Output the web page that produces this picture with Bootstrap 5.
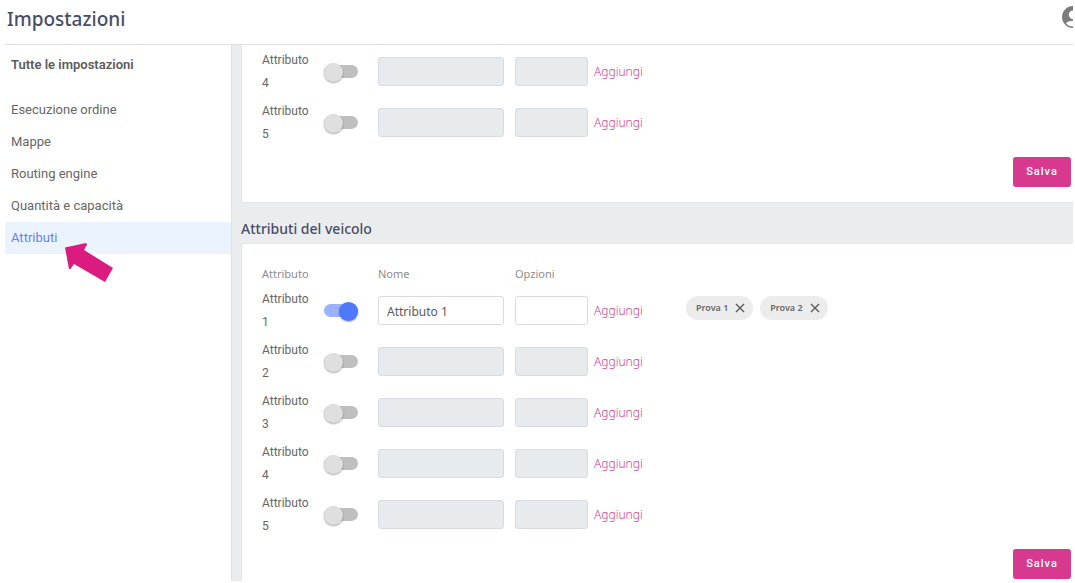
<!DOCTYPE html>
<html lang="it">
<head>
<meta charset="utf-8">
<meta name="viewport" content="width=device-width, initial-scale=1">
<title>Impostazioni</title>
<link href="https://cdn.jsdelivr.net/npm/bootstrap@5.3.0/dist/css/bootstrap.min.css" rel="stylesheet">
<style>
  :root { --ink: #474d66; --pink: #d6398e; --blue: #5078fc; --line: #dfe1e6; --grey: #ebecee; }
  body { font-family: Roboto, "Liberation Sans", sans-serif; font-size: 13px; line-height: 20px; color: #666; background: #fff; }
  .app { min-height: 100vh; padding: 0 2px 2px 5px; overflow: hidden; }
  .topbar { height: 45px; padding: 0 0 7px 2px; border-bottom: 1px solid var(--line); }
  .topbar h1 { font: 500 19px/28px "Noto Sans", sans-serif; color: var(--ink); }
  .account { width: 12px; height: 24px; margin-bottom: 4px; overflow: hidden; }
  .sidebar { width: 227px; border-right: 1px solid var(--line); padding-top: 10px; }
  .sidebar h2 { font-size: 13px; line-height: 20px; font-weight: 600; padding: 0 6px; margin-bottom: 19px; color: #5b5b5b; }
  .sidebar .nav-link { padding: 6px; color: #666; font-size: 13px; }
  .sidebar .nav-link.active { color: #6580fa; background: #ebf3ff; }
  .content { min-width: 0; background: var(--grey); padding-left: 9px; }
  .panel { background: #fff; border: 1px solid #e4e5e7; border-right: 0; border-radius: 3px 0 0 3px; padding: 20px 2px 0 20px; }
  .panel.scrolled { border-top: 0; border-top-left-radius: 0; padding-top: 4px; padding-bottom: 15px; }
  .panel.last { border-bottom: 0; border-bottom-left-radius: 0; }
  .content h2 { font: 500 14px/20px "Noto Sans", sans-serif; color: var(--ink); padding: 16px 0 4px; }
  .attr-row, .attr-head { display: grid; grid-template-columns: 62px 54px 137px 73px 98px 1fr; }
  .attr-row { height: 51px; }
  .attr-head { height: 24px; font-family: "Noto Sans", sans-serif; font-size: 11px; color: #8c8c8c; }
  .attr-row > label { width: 48px; font-size: 12px; line-height: 23px; }
  .toggle { appearance: none; width: 34px; height: 13px; margin: 16px 0 0; border-radius: 7px; background: #bfbfbf; position: relative; }
  .toggle::before { content: ""; position: absolute; left: 0; top: -2px; width: 19px; height: 19px; border-radius: 50%; background: #dfdfdf; box-shadow: 0 1px 2px rgba(0,0,0,.35); }
  .toggle:checked { background: #9cb2ff; }
  .toggle:checked::before { left: 15px; background: var(--blue); }
  .attr-row .form-control { height: 29px; margin-top: 8px; padding: 1px 8px 0; border-color: #d9dbe2; border-radius: 3px; font: 12px/20px "Noto Sans", sans-serif; color: #5b5b5b; }
  .attr-row .form-control:disabled { background: #e7ebee; }
  .attr-row > .name { width: 126px; }
  .add { color: var(--pink); font: 300 12px/20px "Noto Sans", sans-serif; text-decoration: none; margin: 13px 0 0 6px; }
  .chip { height: 24px; border-radius: 12px; background: #ececec; padding: 0 8px 0 10px; font: 600 9px/24px "Noto Sans", sans-serif; color: #666; }
  .chip button { width: 10px; height: 10px; margin-left: 7px; padding: 0; border: 0; background: none; display: flex; }
  .save { background: var(--pink); color: #fff; border: 0; border-radius: 3px; width: 58px; height: 30px; padding: 0; margin-top: 6px; font-size: 11px; font-weight: 500; letter-spacing: 1px; }
  .save:hover { background: #bd2d7b; color: #fff; }
  .chips { gap: 7px; }
  .pointer { position: absolute; left: 59px; top: 20px; width: 50px; height: 40px; pointer-events: none; }
</style>
</head>
<body>
<div class="app d-flex flex-column">
  <header class="topbar d-flex align-items-center justify-content-between">
    <h1 class="m-0">Impostazioni</h1>
    <div class="account">
      <svg width="24" height="24" viewBox="0 0 24 24" fill="#7d7b7b" role="img" aria-label="Profilo"><path d="M12 1a11 11 0 1 0 0 22 11 11 0 0 0 0-22zm0 4.500a4.200 4.200 0 1 1 0 8.400 4.200 4.200 0 0 1 0-8.400zm0 16a9 9 0 0 1-7-3.200c.9-1.500 3.800-2.600 7-2.600s6.100 1.100 7 2.600a9 9 0 0 1-7 3.200z"/></svg>
    </div>
  </header>
  <div class="d-flex flex-grow-1">
    <aside class="sidebar flex-shrink-0">
      <h2>Tutte le impostazioni</h2>
      <nav class="nav flex-column">
        <a class="nav-link" href="#">Esecuzione ordine</a>
        <a class="nav-link" href="#">Mappe</a>
        <a class="nav-link" href="#">Routing engine</a>
        <a class="nav-link" href="#">Quantità e capacità</a>
        <a class="nav-link active position-relative" href="#" aria-current="page">Attributi
          <svg class="pointer" viewBox="0 0 50 40" aria-hidden="true"><path fill="#dc1b80" d="M1 5.500 22 1l1 1.500-3 5.500 29 18-8 14-31-18-3.500 5H5z"/></svg>
        </a>
      </nav>
    </aside>
    <main class="content flex-grow-1 d-flex flex-column">
      <form class="panel scrolled">
        <div class="attr-row">
          <label for="o4">Attributo 4</label><input class="toggle" type="checkbox" role="switch" id="o4">
          <input class="form-control name" type="text" aria-label="Nome" disabled><input class="form-control" type="text" aria-label="Opzioni" disabled>
          <a class="add" href="#">Aggiungi</a>
        </div>
        <div class="attr-row">
          <label for="o5">Attributo 5</label><input class="toggle" type="checkbox" role="switch" id="o5">
          <input class="form-control name" type="text" aria-label="Nome" disabled><input class="form-control" type="text" aria-label="Opzioni" disabled>
          <a class="add" href="#">Aggiungi</a>
        </div>
        <div class="d-flex justify-content-end"><button class="btn save" type="button">Salva</button></div>
      </form>
      <h2 class="m-0">Attributi del veicolo</h2>
      <form class="panel last flex-grow-1">
        <div class="attr-head"><span>Attributo</span><span></span><span>Nome</span><span>Opzioni</span></div>
        <div class="attr-row">
          <label for="v1">Attributo 1</label><input class="toggle" type="checkbox" role="switch" id="v1" checked>
          <input class="form-control name" type="text" aria-label="Nome" value="Attributo 1"><input class="form-control" type="text" aria-label="Opzioni">
          <a class="add" href="#">Aggiungi</a>
          <div class="d-flex align-items-start pt-2 chips">
            <span class="chip d-flex align-items-center">Prova 1<button type="button" aria-label="Rimuovi Prova 1"><svg width="10" height="10" viewBox="0 0 10 10" stroke="#5b5b5b" stroke-width="1.400"><path d="M1 1l8 8M9 1l-8 8"/></svg></button></span>
            <span class="chip d-flex align-items-center">Prova 2<button type="button" aria-label="Rimuovi Prova 2"><svg width="10" height="10" viewBox="0 0 10 10" stroke="#5b5b5b" stroke-width="1.400"><path d="M1 1l8 8M9 1l-8 8"/></svg></button></span>
          </div>
        </div>
        <div class="attr-row">
          <label for="v2">Attributo 2</label><input class="toggle" type="checkbox" role="switch" id="v2">
          <input class="form-control name" type="text" aria-label="Nome" disabled><input class="form-control" type="text" aria-label="Opzioni" disabled>
          <a class="add" href="#">Aggiungi</a>
        </div>
        <div class="attr-row">
          <label for="v3">Attributo 3</label><input class="toggle" type="checkbox" role="switch" id="v3">
          <input class="form-control name" type="text" aria-label="Nome" disabled><input class="form-control" type="text" aria-label="Opzioni" disabled>
          <a class="add" href="#">Aggiungi</a>
        </div>
        <div class="attr-row">
          <label for="v4">Attributo 4</label><input class="toggle" type="checkbox" role="switch" id="v4">
          <input class="form-control name" type="text" aria-label="Nome" disabled><input class="form-control" type="text" aria-label="Opzioni" disabled>
          <a class="add" href="#">Aggiungi</a>
        </div>
        <div class="attr-row">
          <label for="v5">Attributo 5</label><input class="toggle" type="checkbox" role="switch" id="v5">
          <input class="form-control name" type="text" aria-label="Nome" disabled><input class="form-control" type="text" aria-label="Opzioni" disabled>
          <a class="add" href="#">Aggiungi</a>
        </div>
        <div class="d-flex justify-content-end"><button class="btn save" type="button">Salva</button></div>
      </form>
    </main>
  </div>
</div>
<script src="https://cdn.jsdelivr.net/npm/bootstrap@5.3.0/dist/js/bootstrap.bundle.min.js"></script>
</body>
</html>
